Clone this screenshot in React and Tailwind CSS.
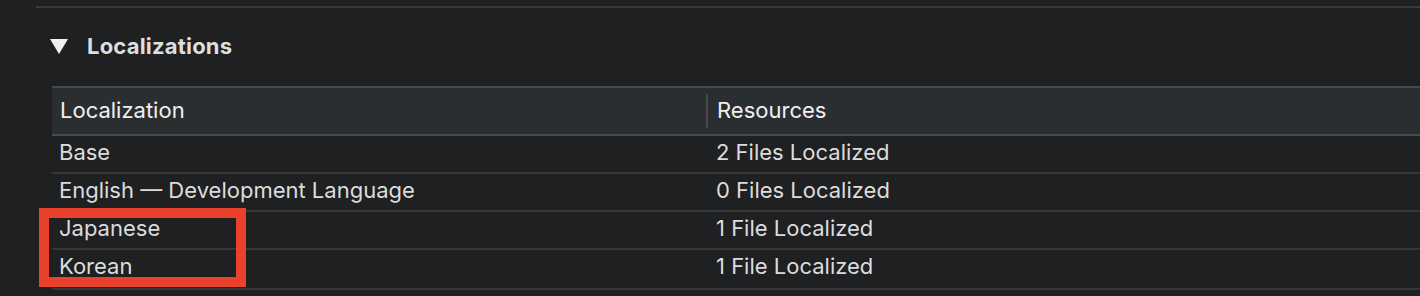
export default function App() {
  const rows = [
    ["Base", "2 Files Localized"],
    ["English — Development Language", "0 Files Localized"],
    ["Japanese", "1 File Localized"],
    ["Korean", "1 File Localized"],
  ];
  return (
    <div
      className="relative w-[1420px] h-[296px] overflow-hidden bg-[#1f2022]"
      style={{ fontFamily: "Inter, 'Noto Sans', 'Liberation Sans', sans-serif" }}
    >
      <div className="ml-[36px] mt-[6px] h-[2px] bg-[#38393b]" />
      <div className="flex items-center h-[78px] pl-[50px]">
        <svg width="18" height="15" viewBox="0 0 18 15" className="mt-[-2px]">
          <polygon points="0,0 18,0 9,15" fill="#f2f2f2" />
        </svg>
        <span className="ml-[19px] text-[22px] font-bold tracking-[0.2px] text-[#dedede] leading-none mt-[-3px]">
          Localizations
        </span>
      </div>
      <div className="ml-[52px]">
        <div className="flex h-[50px] bg-[#2b2e31] border-y-2 border-[#46484a] text-[22px] leading-none text-[#f0f0f0]">
          <div className="w-[654px] flex items-center pl-[8px] pb-[2px]">Localization</div>
          <div className="w-[2px] my-[6px] bg-[#45484b]" />
          <div className="flex-1 flex items-center pl-[9px] pb-[2px]">Resources</div>
        </div>
        {rows.map(([a, b], i) => (
          <div
            key={i}
            className={`flex ${i === 3 ? "h-[40px] pb-[6px]" : "h-[38px] pb-[4px]"} border-b-2 border-[#363739] text-[22px] leading-none text-[#dcdcdc]`}
          >
            <div className="w-[654px] flex items-center pl-[7px]">{a}</div>
            <div className="flex-1 flex items-center pl-[10px]">{b}</div>
          </div>
        ))}
      </div>
      <div className="absolute left-[39px] top-[208px] w-[207px] h-[79px] border-[10px] border-[#e8412c]" />
    </div>
  );
}
